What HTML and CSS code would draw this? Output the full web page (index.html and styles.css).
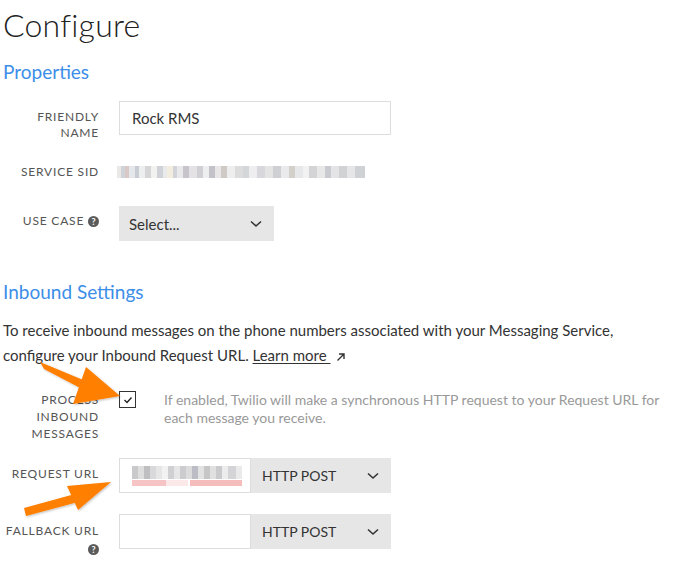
FILE: index.html
```html
<!DOCTYPE html>
<html>
<head>
<meta charset="utf-8">
<link rel="stylesheet" href="styles.css">
</head>
<body>
<div class="page">
  <h1 class="title">Configure</h1>
  <h2 class="section">Properties</h2>

  <div class="row row-friendly">
    <div class="label">FRIENDLY<br>NAME</div>
    <div class="control"><div class="input input-wide">Rock RMS</div></div>
  </div>

  <div class="row row-sid">
    <div class="label">SERVICE SID</div>
    <div class="control"><div class="blur-sid"></div></div>
  </div>

  <div class="row row-usecase">
    <div class="label">USE CASE <span class="help">?</span></div>
    <div class="control">
      <div class="select select-usecase"><span>Select...</span>
        <svg class="chev" width="12" height="8" viewBox="0 0 12 8"><polyline points="1,1.5 6,6 11,1.5" fill="none" stroke="#333" stroke-width="1.6"/></svg>
      </div>
    </div>
  </div>

  <h2 class="section section-inbound">Inbound Settings</h2>
  <p class="intro">To receive inbound messages on the phone numbers associated with your Messaging Service, configure your Inbound Request URL. <a class="learn">Learn more&nbsp;</a><svg class="ext" width="10" height="10" viewBox="0 0 10 10"><path d="M1.5 8.5 L8 2 M3 2 H8 V7" fill="none" stroke="#333" stroke-width="1.4"/></svg></p>

  <div class="row row-process">
    <div class="label">PROCESS<br>INBOUND<br>MESSAGES</div>
    <div class="control control-process">
      <div class="checkbox"><svg width="10" height="8" viewBox="0 0 10 8"><polyline points="1.5,4 4,6.5 8.5,1.5" fill="none" stroke="#222" stroke-width="1.4"/></svg></div>
      <div class="hint">If enabled, Twilio will make a synchronous HTTP request to your Request URL for each message you receive.</div>
    </div>
  </div>

  <div class="row row-url">
    <div class="label">REQUEST URL</div>
    <div class="control combo">
      <div class="input input-url"><div class="blur-url"></div></div>
      <div class="select select-method"><span>HTTP POST</span>
        <svg class="chev" width="12" height="8" viewBox="0 0 12 8"><polyline points="1,1.5 6,6 11,1.5" fill="none" stroke="#333" stroke-width="1.6"/></svg>
      </div>
    </div>
  </div>

  <div class="row row-fallback">
    <div class="label">FALLBACK URL<br><span class="help">?</span></div>
    <div class="control combo">
      <div class="input input-url input-empty"></div>
      <div class="select select-method"><span>HTTP POST</span>
        <svg class="chev" width="12" height="8" viewBox="0 0 12 8"><polyline points="1,1.5 6,6 11,1.5" fill="none" stroke="#333" stroke-width="1.6"/></svg>
      </div>
    </div>
  </div>

  <svg class="arrows" width="693" height="584" viewBox="0 0 693 584">
    <defs>
      <filter id="sh" x="-20%" y="-20%" width="140%" height="140%">
        <feDropShadow dx="1" dy="1" stdDeviation="1" flood-color="#000" flood-opacity="0.25"/>
      </filter>
    </defs>
    <g fill="#ff7f00" filter="url(#sh)">
      <polygon points="40,362 44,369 84,390 88,382"/>
      <polygon points="120,396 86,367 73,404"/>
      <polygon points="24,508 26,516 78,502 75,494"/>
      <polygon points="111,482 67,486 78,510"/>
    </g>
  </svg>
</div>
</body>
</html>
```
FILE: styles.css
```css
html, body {
  margin: 0;
  padding: 0;
  background: #fff;
}
.page {
  position: relative;
  width: 693px;
  height: 584px;
  overflow: hidden;
  padding-left: 3px;
  box-sizing: border-box;
  font-family: "Lato", "Open Sans", sans-serif;
  color: #333;
}
.title {
  margin: 0;
  padding-top: 4px;
  font-size: 32px;
  font-weight: 300;
  line-height: 42px;
  color: #222;
  letter-spacing: 0.2px;
}
.section {
  margin: 14px 0 0 0;
  font-size: 19px;
  font-weight: 400;
  line-height: 24px;
  color: #3d8ee8;
}
.row {
  display: grid;
  grid-template-columns: 96px 1fr;
  column-gap: 20px;
  align-items: start;
}
.label {
  text-align: right;
  font-size: 12px;
  letter-spacing: 0.8px;
  line-height: 16px;
  color: #555;
}
.row-friendly { margin-top: 17px; }
.row-friendly .label { padding-top: 8px; }
.row-sid { margin-top: 23px; }
.row-sid .label { padding-top: 0; }
.row-usecase { margin-top: 26px; }
.row-usecase .label { padding-top: 7px; }
.input {
  box-sizing: border-box;
  height: 34px;
  border: 1px solid #ddd;
  background: #fff;
  font-size: 15px;
  line-height: 32px;
  padding-left: 12px;
  color: #333;
}
.input-wide { width: 272px; }
.blur-sid {
  width: 248px;
  height: 12px;
  margin-top: 2px;
  margin-left: -2px;
  background:
    linear-gradient(90deg,
      #ece8e6 0 4px, #cfd3d8 4px 8px, #d8c8c8 8px 12px, #e4e8ea 12px 18px, #c7cdd2 18px 22px, #eceef0 22px 28px,
      #d6d6d8 28px 34px, #f2f2f0 34px 40px, #cfd2d6 40px 46px, #e8eaec 46px 50px, #f3ede0 50px 56px, #d2d4da 56px 60px,
      #e9e9eb 60px 66px, #c8c4cc 66px 72px, #e4e2e4 72px 80px, #d0d0d4 80px 86px, #eceef0 86px 92px, #c4c2c8 92px 98px,
      #e8e6e6 98px 104px, #cfcac6 104px 110px, #eeeeee 110px 118px, #dcdcdc 118px 126px, #d3d7da 126px 132px, #eeeef0 132px 140px,
      #d8d8dc 140px 148px, #e4e4e4 148px 156px, #cfd0d3 156px 164px, #eaeaec 164px 172px, #d2d0c8 172px 178px, #e6e8ea 178px 186px,
      #f2f2f2 186px 192px, #d4d4d6 192px 200px, #e8e8e8 200px 208px, #c8ccd0 208px 214px, #e4e4e6 214px 222px, #d0d2d4 222px 230px,
      #e6e6e8 230px 238px, #cfd2d4 238px 248px);
}
.help {
  display: inline-block;
  width: 11px;
  height: 11px;
  border-radius: 50%;
  background: #5a5a5a;
  color: #fff;
  font-size: 9px;
  font-weight: 700;
  line-height: 11px;
  text-align: center;
  letter-spacing: 0;
  vertical-align: 0px;
}
.select {
  box-sizing: border-box;
  height: 35px;
  background: #e6e6e6;
  display: flex;
  align-items: center;
  justify-content: space-between;
  font-size: 15px;
  color: #333;
}
.select-usecase {
  width: 155px;
  padding: 0 12px 0 10px;
}
.section-inbound { margin-top: 39px; }
.intro {
  margin: 14px 0 0 0;
  font-size: 15px;
  line-height: 25px;
  color: #333;
  width: 645px;
}
.learn {
  color: #333;
  text-decoration: underline;
  text-underline-offset: 2px;
}
.ext { vertical-align: -1px; margin-left: 6px; }
.row-process { margin-top: 23px; }
.row-process .label { line-height: 17px; padding-top: 0; }
.control-process {
  display: flex;
  align-items: flex-start;
  gap: 28px;
}
.checkbox {
  box-sizing: border-box;
  width: 17px;
  height: 17px;
  border: 1px solid #333;
  margin-top: 0;
  display: flex;
  align-items: center;
  justify-content: center;
  flex: none;
}
.hint {
  font-size: 14px;
  line-height: 18px;
  color: #999;
  width: 500px;
  margin-top: 0;
}
.row-url { margin-top: 16px; }
.row-url .label { padding-top: 8px; }
.row-fallback { margin-top: 21px; }
.row-fallback .label { padding-top: 8px; line-height: 18px; }
.combo { display: flex; }
.input-url {
  width: 132px;
  height: 35px;
  padding: 7px 0 0 12px;
}
.blur-url {
  width: 110px;
  height: 20px;
  background:
    linear-gradient(180deg, transparent 0 13px, #fff 13px 14px, transparent 14px),
    linear-gradient(90deg,
      #c9c9cc 0 6px, #dedede 6px 12px, #bfbfc2 12px 18px, #d9d9dc 18px 24px, #e6e6e6 24px 30px, #f2f2f2 30px 36px,
      #d0d0d2 36px 42px, #e6e6e6 42px 48px, #ccccd0 48px 54px, #dcdcdc 54px 60px, #bcbcc4 60px 66px, #e2e2e2 66px 72px,
      #c6c6c6 72px 78px, #e0e0e0 78px 84px, #cacacc 84px 90px, #ececec 90px 96px, #d4d4d8 96px 104px, #eaeaea 104px 110px);
  position: relative;
}
.blur-url::after {
  content: "";
  position: absolute;
  left: 0;
  right: 0;
  bottom: 0;
  height: 6px;
  background: linear-gradient(90deg, #f6c4c4 0 34px, #fbe8e8 34px 56px, #fff 56px 58px, #f5bcbc 58px 110px);
}
.input-empty { padding: 0; }
.select-method {
  width: 140px;
  padding: 0 12px 0 11px;
  font-size: 14px;
}
.arrows {
  position: absolute;
  left: 0;
  top: 0;
  pointer-events: none;
}
```
